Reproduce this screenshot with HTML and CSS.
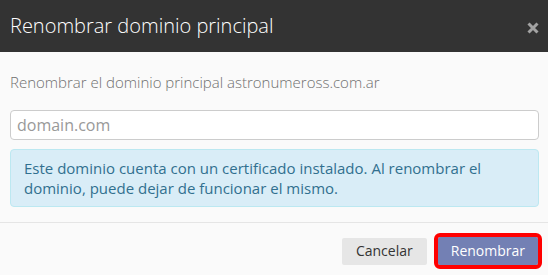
FILE: index.html
```html
<!doctype html>
<html lang="es">
  <head>
    <meta charset="UTF-8" />
    <meta name="viewport" content="width=device-width, initial-scale=1.0" />
    <title>Renombrar dominio principal</title>
    <link rel="stylesheet" href="styles.css">
  </head>

  <body>
    <div class="modal">
      <div class="modal-header">
        <h4 class="modal-title">Renombrar dominio principal</h4>
        <button type="button" class="close" aria-label="Cerrar">
          <svg width="12" height="12" viewBox="0 0 12 12">
            <path d="M1.5 1.5 L10.5 10.5 M10.5 1.5 L1.5 10.5" />
          </svg>
        </button>
      </div>

      <div class="modal-body">
        <p class="lead-text">Renombrar el dominio principal astronumeross.com.ar</p>
        <input class="form-control" type="text" placeholder="domain.com" />
        <div class="alert alert-info">
          Este dominio cuenta con un certificado instalado. Al renombrar el
          dominio, puede dejar de funcionar el mismo.
        </div>
      </div>

      <div class="modal-footer">
        <button type="button" class="btn btn-default">Cancelar</button>
        <button type="button" class="btn btn-primary highlighted">Renombrar</button>
      </div>
    </div>
  </body>
</html>
```

FILE: styles.css
```css
* {
  box-sizing: border-box;
}
body {
  margin: 0;
  font-family: 'Open Sans', sans-serif;
  font-size: 14px;
  line-height: 20px;
  background: #fafafa;
}
.modal {
  width: 548px;
  height: 275px;
  display: flex;
  flex-direction: column;
  overflow: hidden;
}
.modal-header {
  display: flex;
  align-items: center;
  justify-content: space-between;
  height: 52px;
  padding: 0 9px 0 10px;
  background-color: #333333;
}
.modal-title {
  margin: 0;
  font-size: 20px;
  font-weight: 300;
  line-height: 28px;
  color: #ffffff;
}
.close {
  display: flex;
  padding: 0;
  margin-top: 3px;
  border: none;
  background: none;
  cursor: pointer;
}
.close path {
  stroke: #a3a3a3;
  stroke-width: 3;
  fill: none;
}
.modal-body {
  padding: 20px 9px 15px 10px;
  border-bottom: 1px solid #e5e5e5;
}
.lead-text {
  margin: 0 0 18px;
  font-size: 15px;
  font-weight: 300;
  color: #6f6f6f;
}
.form-control {
  display: block;
  width: 100%;
  height: 30px;
  padding: 3px 6px;
  font-family: inherit;
  font-size: 16px;
  color: #555555;
  background: #ffffff;
  border: 1px solid #cccccc;
  border-radius: 4px;
}
.form-control::placeholder {
  color: #999999;
}
.alert {
  margin-top: 9px;
  padding: 8px 13px;
  font-size: 15px;
  border: 1px solid #bce8f1;
  border-radius: 4px;
}
.alert-info {
  background-color: #d9edf7;
  color: #31708f;
}
.modal-footer {
  display: flex;
  justify-content: flex-end;
  align-items: center;
  gap: 11px;
  padding: 14px 10px 0;
}
.btn {
  height: 28px;
  padding: 0 14px;
  font-family: inherit;
  font-size: 14px;
  line-height: 26px;
  border: none;
  border-radius: 2px;
  cursor: pointer;
}
.btn-default {
  height: 27px;
  background-color: #e6e6e6;
  color: #333333;
}
.btn-primary {
  padding: 0 13px;
  background-color: #7380b4;
  color: #ffffff;
}
/* red annotation around the main action */
.highlighted {
  outline: 4px solid #ff0000;
  outline-offset: 0;
}
```
